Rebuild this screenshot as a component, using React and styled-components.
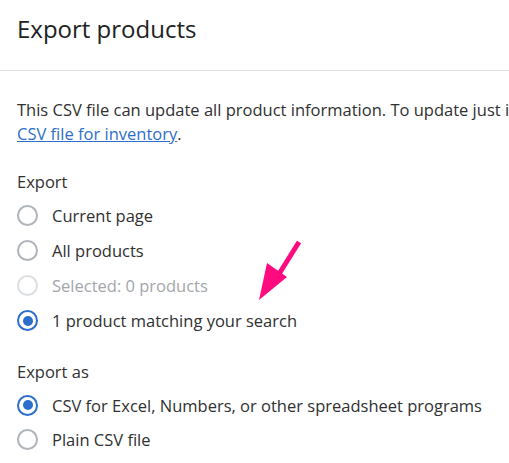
import React from 'react';
import styled, { createGlobalStyle } from 'styled-components';

const GlobalStyle = createGlobalStyle`
  body {
    margin: 0;
    background: #ffffff;
    font-family: 'Open Sans', 'Noto Sans', sans-serif;
    color: #303030;
  }
`;

const Modal = styled.div`
  width: 509px;
  height: 463px;
  overflow: hidden;
  position: relative;
  background: #ffffff;
`;

const Header = styled.div`
  height: 71px;
  padding: 13px 17px 0;
  border-bottom: 1px solid #e1e3e5;
  box-sizing: border-box;
`;

const Title = styled.h2`
  margin: 0;
  font-size: 24px;
  line-height: 32px;
  font-weight: 400;
  color: #202223;
  white-space: nowrap;
`;

const Body = styled.div`
  padding: 27px 17px 0;
  display: flex;
  flex-direction: column;
`;

const Intro = styled.p`
  margin: 0 0 24px;
  font-size: 16.5px;
  line-height: 24px;
  white-space: nowrap;
  color: #303030;
`;

const Link = styled.a`
  color: #2c6ecb;
  text-decoration: underline;
`;

const Group = styled.div`
  display: flex;
  flex-direction: column;
  margin-bottom: ${(p) => p.$gap || 0}px;
`;

const Label = styled.div`
  font-size: 16.5px;
  line-height: 24px;
  color: #303030;
  margin-bottom: 4px;
`;

const Option = styled.label`
  display: flex;
  align-items: center;
  gap: 14px;
  height: ${(p) => p.$h || 35}px;
  font-size: 16.5px;
  color: ${(p) => (p.$disabled ? '#a3a6aa' : '#303030')};
  white-space: nowrap;
`;

const Circle = styled.span`
  width: 21px;
  height: 21px;
  box-sizing: border-box;
  border-radius: 50%;
  border: 2px solid
    ${(p) => (p.$checked ? '#2c6ecb' : p.$disabled ? '#dcdfe2' : '#aeb4b9')};
  display: flex;
  align-items: center;
  justify-content: center;
  flex-shrink: 0;
  &::after {
    content: '';
    display: ${(p) => (p.$checked ? 'block' : 'none')};
    width: 10px;
    height: 10px;
    border-radius: 50%;
    background: #2c6ecb;
  }
`;

const Arrow = styled.svg`
  position: absolute;
  left: 255px;
  top: 236px;
`;

const Radio = ({ checked, disabled, children, h }) => (
  <Option $disabled={disabled} $h={h}>
    <Circle $checked={checked} $disabled={disabled} />
    {children}
  </Option>
);

export default function App() {
  return (
    <Modal>
      <GlobalStyle />
      <Header>
        <Title>Export products</Title>
      </Header>
      <Body>
        <Intro>
          This CSV file can update all product information. To update just inventory quantities use the
          <br />
          <Link>CSV file for inventory</Link>.
        </Intro>
        <Group $gap={22}>
          <Label>Export</Label>
          <Radio>Current page</Radio>
          <Radio>All products</Radio>
          <Radio disabled>Selected: 0 products</Radio>
          <Radio checked>1 product matching your search</Radio>
        </Group>
        <Group>
          <Label>Export as</Label>
          <Radio checked h={34}>CSV for Excel, Numbers, or other spreadsheet programs</Radio>
          <Radio h={34}>Plain CSV file</Radio>
        </Group>
      </Body>
      <Arrow width="50" height="70" viewBox="0 0 50 70">
        <line x1="44" y1="6" x2="24" y2="38" stroke="#ff0a7f" strokeWidth="5" />
        <polygon points="4,64 12,27 32,41" fill="#ff0a7f" />
      </Arrow>
    </Modal>
  );
}
